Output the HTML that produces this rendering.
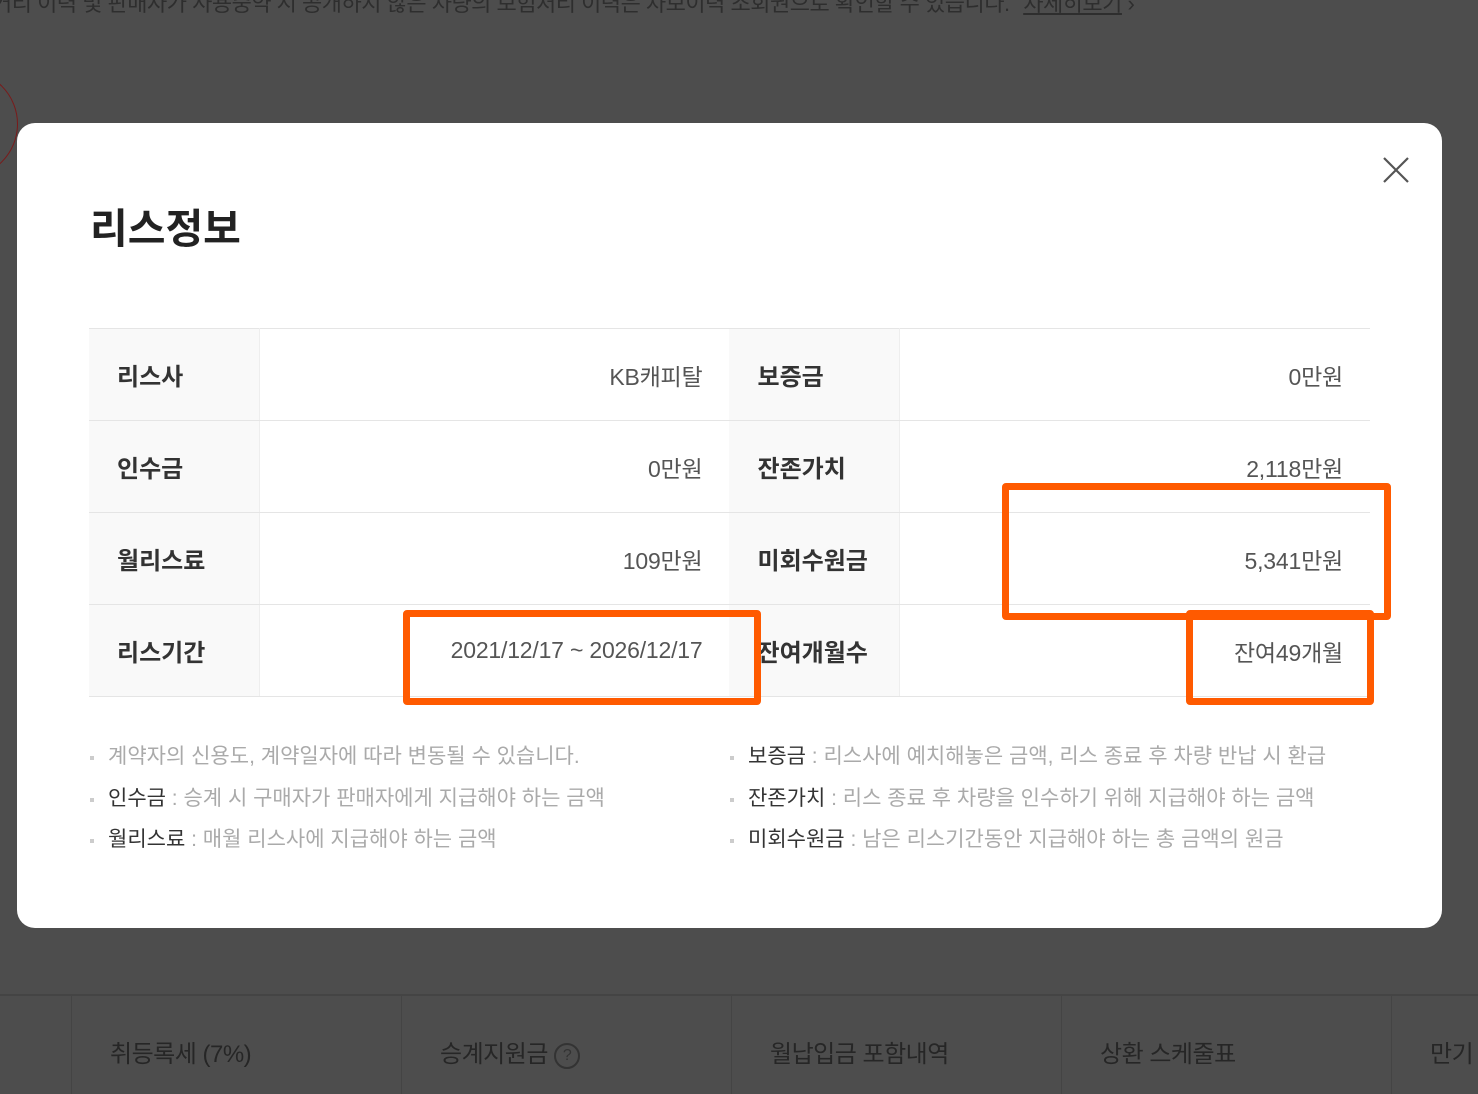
<!DOCTYPE html>
<html><head><meta charset="utf-8"><style>
*{margin:0;padding:0;box-sizing:border-box}
body{width:1478px;height:1092px;overflow:hidden;background:#4d4d4d;font-family:"Liberation Sans","Noto Sans CJK KR",sans-serif;position:relative}
.topt{position:absolute;left:-8px;top:-14px;font-size:22px;color:#2e2e2e;white-space:nowrap;letter-spacing:-0.5px}
.topt u{margin-left:8px}
.circ{position:absolute;left:-90px;top:70px;width:108px;height:108px;border:1px solid #7a1a1a;border-radius:50%}
.bot{position:absolute;left:0;top:994px;width:1478px;height:98px;border-top:2px solid #444}
.bot .c{position:absolute;top:0;height:98px;border-left:1px solid #444;font-size:24px;color:#262626;padding:38px 0 0 38px;letter-spacing:-0.5px;white-space:nowrap}
.q{display:inline-block;width:26px;height:26px;border:2px solid #333;border-radius:50%;font-size:16px;text-align:center;line-height:22px;vertical-align:middle;color:#333}
.modal{position:absolute;left:17px;top:123px;width:1425px;height:805px;background:#fff;border-radius:18px}
.title{position:absolute;left:73px;top:72px;font-size:41px;font-weight:bold;color:#222;letter-spacing:0}
.x{position:absolute;left:1364px;top:32px;width:30px;height:30px}
table{position:absolute;left:72px;top:205px;width:1281px;border-collapse:collapse;border-top:1px solid #e5e5e5}
td{height:92px;border-bottom:1px solid #e5e5e5;font-size:23px;letter-spacing:-0.2px;vertical-align:middle}
td.l{width:170px;background:#f9f9f9;font-weight:bold;color:#333;padding-left:28px;border-right:1px solid #eee;letter-spacing:0;font-size:24px}
td.v{width:470px;text-align:right;padding-right:27px;color:#555}
.notes{position:absolute;top:613px;font-size:21px;color:#aaa;letter-spacing:0;line-height:41.5px}
.notes div{position:relative;padding-left:18px;white-space:nowrap}
.notes div:before{content:"";position:absolute;left:0;top:20px;width:4px;height:4px;background:#ccc}
.notes b{font-weight:normal;color:#333}
.box{position:absolute;border:7px solid #ff5a00;border-radius:4px}
</style></head><body>
<div class="topt">거리 이력 및 판매자가 사용중약 시 공개하지 않은 차량의 보험처리 이력은 차보이력 조회권으로 확인할 수 있습니다. <u>차세히보기</u> ›</div>
<div class="circ"></div>
<div class="bot">
<div class="c" style="left:71px;width:330px">취등록세 (7%)</div>
<div class="c" style="left:401px;width:330px">승계지원금 <span class="q">?</span></div>
<div class="c" style="left:731px;width:330px">월납입금 포함내역</div>
<div class="c" style="left:1061px;width:330px">상환 스케줄표</div>
<div class="c" style="left:1391px;width:100px">만기</div>
</div>
<div class="modal">
<div class="title">리스정보</div>
<svg class="x" viewBox="0 0 30 30"><path d="M3 3L27 27M27 3L3 27" stroke="#555" stroke-width="2.2" fill="none"/></svg>
<table>
<tr><td class="l">리스사</td><td class="v">KB캐피탈</td><td class="l">보증금</td><td class="v">0만원</td></tr>
<tr><td class="l">인수금</td><td class="v">0만원</td><td class="l">잔존가치</td><td class="v">2,118만원</td></tr>
<tr><td class="l">월리스료</td><td class="v">109만원</td><td class="l">미회수원금</td><td class="v">5,341만원</td></tr>
<tr><td class="l">리스기간</td><td class="v">2021/12/17 ~ 2026/12/17</td><td class="l">잔여개월수</td><td class="v">잔여49개월</td></tr>
</table>
<div class="notes" style="left:73px">
<div>계약자의 신용도, 계약일자에 따라 변동될 수 있습니다.</div>
<div><b>인수금</b> : 승계 시 구매자가 판매자에게 지급해야 하는 금액</div>
<div><b>월리스료</b> : 매월 리스사에 지급해야 하는 금액</div>
</div>
<div class="notes" style="left:713px">
<div><b>보증금</b> : 리스사에 예치해놓은 금액, 리스 종료 후 차량 반납 시 환급</div>
<div><b>잔존가치</b> : 리스 종료 후 차량을 인수하기 위해 지급해야 하는 금액</div>
<div><b>미회수원금</b> : 남은 리스기간동안 지급해야 하는 총 금액의 원금</div>
</div>
</div>
<div class="box" style="left:403px;top:610px;width:358px;height:95px"></div>
<div class="box" style="left:1002px;top:483px;width:389px;height:137px"></div>
<div class="box" style="left:1186px;top:610px;width:188px;height:95px"></div>
</body></html>
